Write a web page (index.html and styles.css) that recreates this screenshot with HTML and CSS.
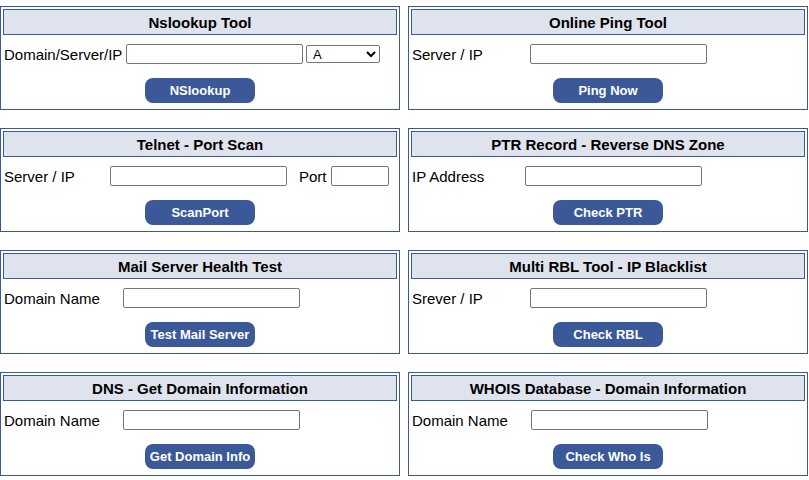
FILE: index.html
```html
<!DOCTYPE html>
<html>
<head>
<meta charset="utf-8">
<link rel="stylesheet" href="styles.css">
</head>
<body>
<div class="grid">
  <div class="box">
    <div class="head">Nslookup Tool</div>
    <div class="row">
      <span class="lbl w122">Domain/Server/IP</span>
      <input class="txt" type="text">
      <select class="sel"><option>A</option><option>MX</option><option>NS</option></select>
    </div>
    <div class="act"><button class="btn">NSlookup</button></div>
  </div>
  <div class="box">
    <div class="head">Online Ping Tool</div>
    <div class="row">
      <span class="lbl w118">Server / IP</span>
      <input class="txt" type="text">
    </div>
    <div class="act"><button class="btn">Ping Now</button></div>
  </div>
  <div class="box">
    <div class="head">Telnet - Port Scan</div>
    <div class="row">
      <span class="lbl w106">Server / IP</span>
      <input class="txt" type="text">
      <span class="port">Port</span>
      <input class="txt small" type="text">
    </div>
    <div class="act"><button class="btn">ScanPort</button></div>
  </div>
  <div class="box">
    <div class="head">PTR Record - Reverse DNS Zone</div>
    <div class="row">
      <span class="lbl w113">IP Address</span>
      <input class="txt" type="text">
    </div>
    <div class="act"><button class="btn">Check PTR</button></div>
  </div>
  <div class="box">
    <div class="head">Mail Server Health Test</div>
    <div class="row">
      <span class="lbl w119">Domain Name</span>
      <input class="txt" type="text">
    </div>
    <div class="act"><button class="btn">Test Mail Server</button></div>
  </div>
  <div class="box">
    <div class="head">Multi RBL Tool - IP Blacklist</div>
    <div class="row">
      <span class="lbl w118">Srever / IP</span>
      <input class="txt" type="text">
    </div>
    <div class="act"><button class="btn">Check RBL</button></div>
  </div>
  <div class="box">
    <div class="head">DNS - Get Domain Information</div>
    <div class="row">
      <span class="lbl w119">Domain Name</span>
      <input class="txt" type="text">
    </div>
    <div class="act"><button class="btn">Get Domain Info</button></div>
  </div>
  <div class="box">
    <div class="head">WHOIS Database - Domain Information</div>
    <div class="row">
      <span class="lbl w119">Domain Name</span>
      <input class="txt" type="text">
    </div>
    <div class="act"><button class="btn">Check Who Is</button></div>
  </div>
</div>
</body>
</html>
```
FILE: styles.css
```css
html, body {
  margin: 0;
  padding: 0;
  background: #ffffff;
}
body {
  padding-top: 6px;
  font-family: "Liberation Sans", Arial, sans-serif;
  color: #000;
}
.grid {
  display: grid;
  grid-template-columns: 400px 400px;
  column-gap: 8px;
  row-gap: 18px;
}
.box {
  box-sizing: border-box;
  height: 104px;
  border: 1px solid #3b5998;
  padding: 2px;
}
.head {
  box-sizing: border-box;
  height: 26px;
  border: 1px solid #3b5998;
  background: #dfe3ee;
  font-weight: bold;
  font-size: 15px;
  line-height: 23px;
  padding-top: 1px;
  text-align: center;
}
.row {
  display: flex;
  align-items: center;
  height: 20px;
  margin-top: 9px;
  padding-left: 1px;
  font-size: 15px;
}
.lbl {
  flex: none;
  white-space: nowrap;
}
.w106 { width: 106px; }
.w113 { width: 113px; }
.w118 { width: 118px; }
.w119 { width: 119px; }
.w122 { width: 122px; }
.txt {
  box-sizing: border-box;
  width: 177px;
  height: 20px;
  margin: 0;
  border: 1px solid #767676;
  border-radius: 2px;
  padding: 1px 2px;
  font: 13px "Liberation Sans", Arial, sans-serif;
}
.txt.small {
  width: 58px;
}
.port {
  margin-left: 12px;
  margin-right: 4px;
}
.sel {
  box-sizing: border-box;
  width: 74px;
  height: 18px;
  margin: 0 0 0 3px;
  border: 1px solid #767676;
  border-radius: 2px;
  padding: 0 0 0 2px;
  font: 13px "Liberation Sans", Arial, sans-serif;
  background: #fff;
  color: #000;
}
.act {
  display: flex;
  justify-content: center;
  margin-top: 14px;
}
.btn {
  box-sizing: border-box;
  width: 110px;
  height: 25px;
  margin: 0;
  padding: 0;
  border: none;
  border-radius: 8px;
  background: #3b5998;
  color: #fff;
  font: bold 13px "Liberation Sans", Arial, sans-serif;
  line-height: 25px;
}
```
